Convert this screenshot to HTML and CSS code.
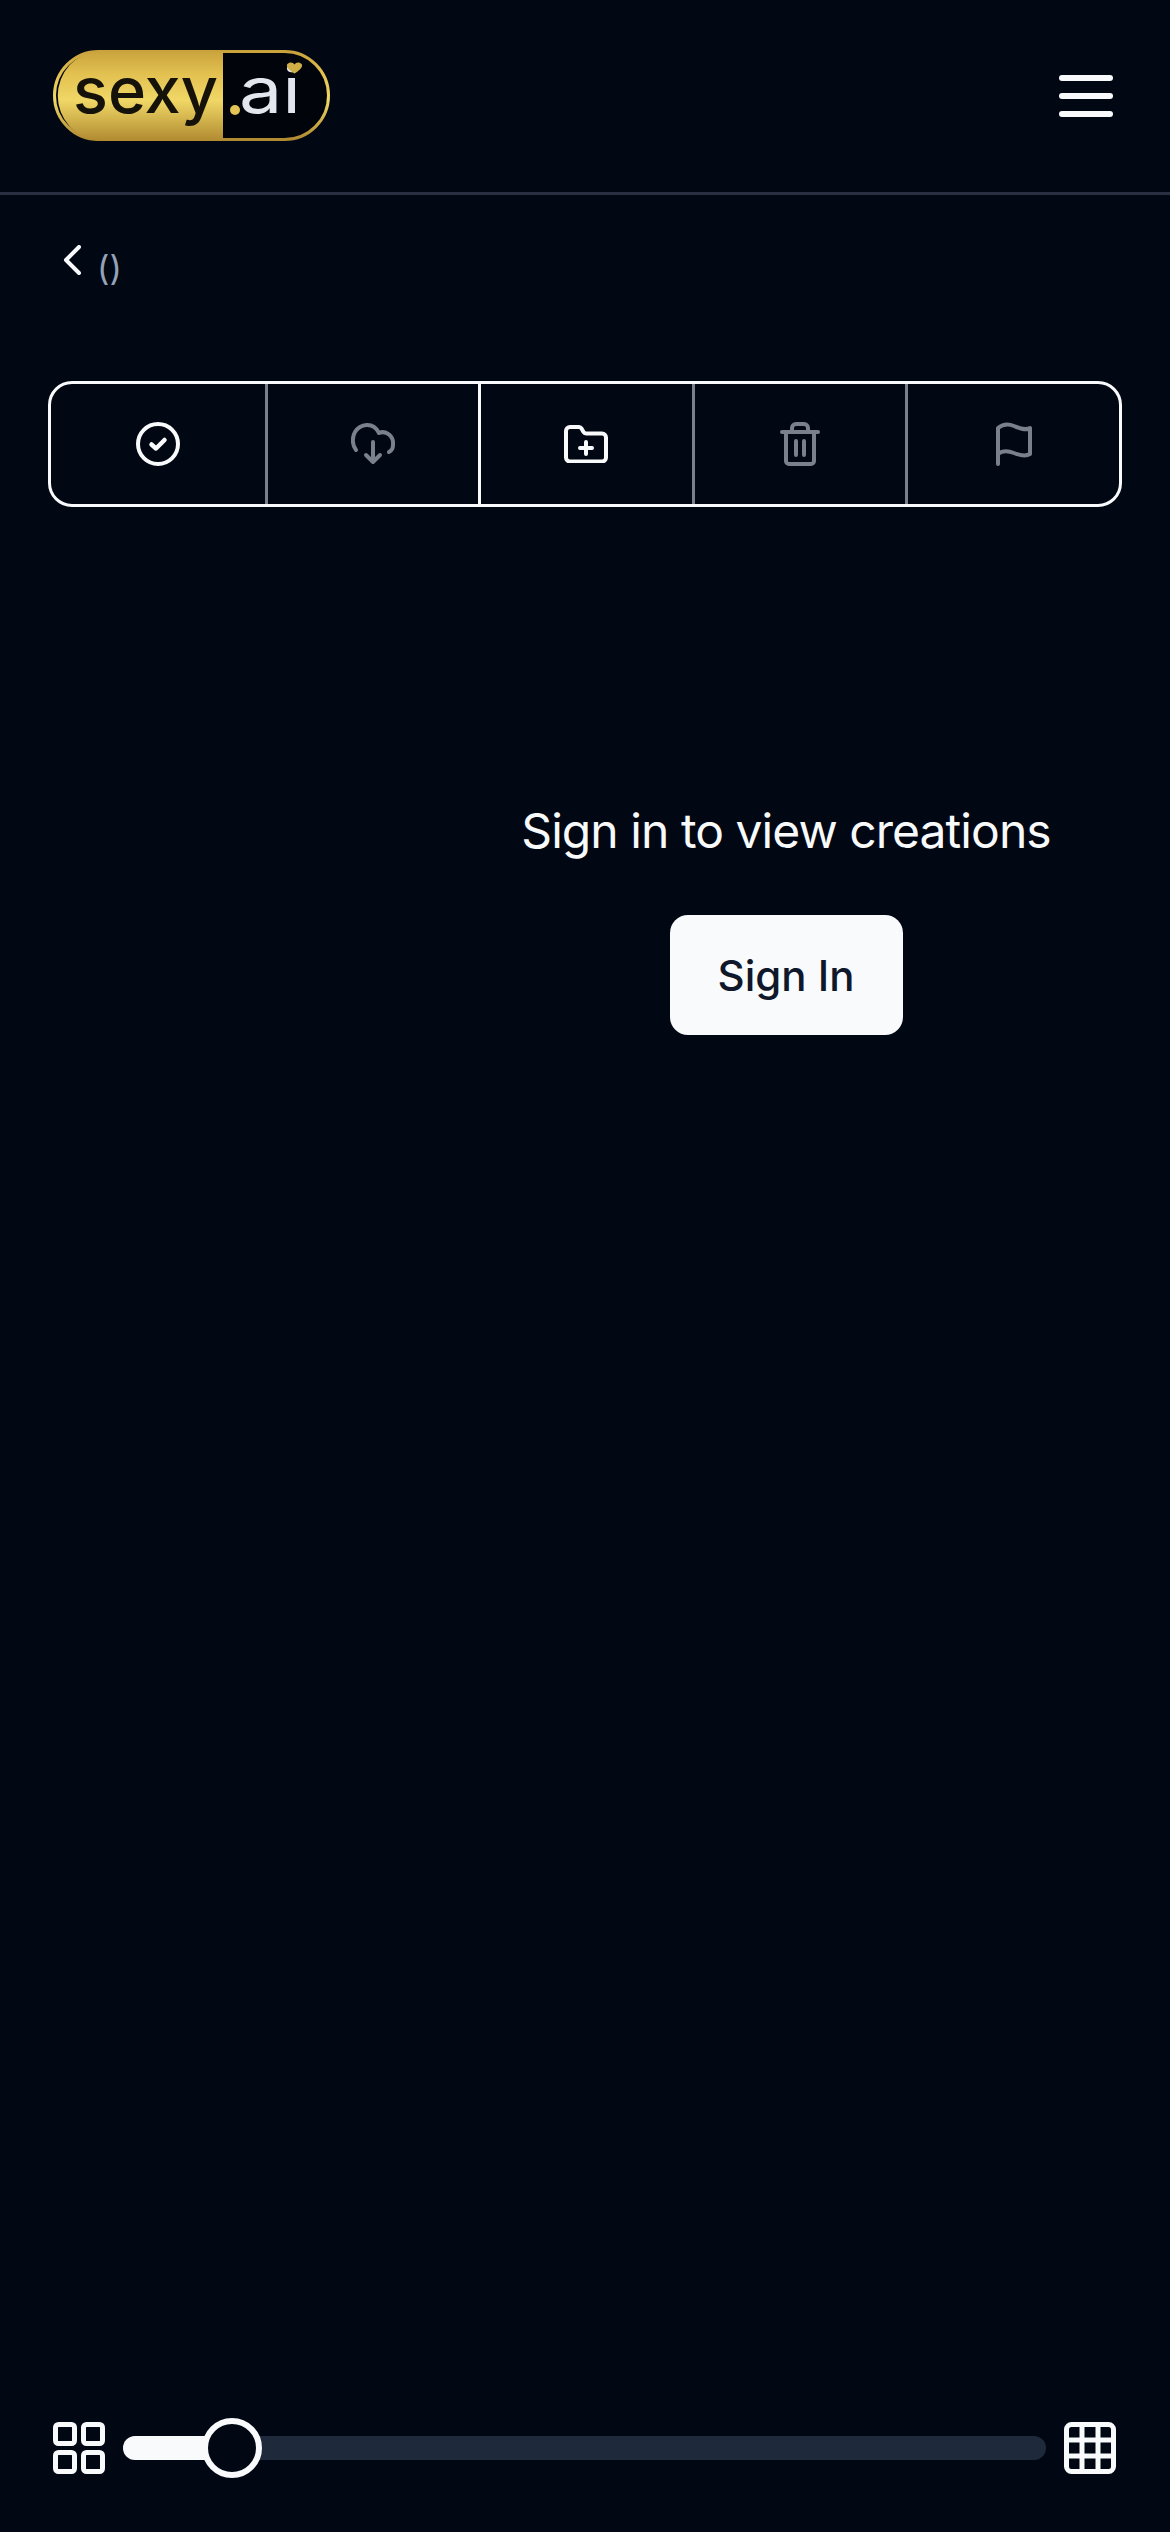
FILE: index.html
```html
<!DOCTYPE html>
<html lang="en">
<head>
<meta charset="UTF-8">
<meta name="viewport" content="width=device-width, initial-scale=1.0">
<title>Creations</title>
<link rel="stylesheet" href="styles.css">
</head>
<body>

<header class="topbar">
  <svg class="logo" viewBox="0 0 277 92" width="277" height="92">
    <defs>
      <linearGradient id="gold" x1="0" y1="0" x2="0" y2="1">
        <stop offset="0" stop-color="#c9a23c"/>
        <stop offset="0.25" stop-color="#e2c050"/>
        <stop offset="0.55" stop-color="#f0d766"/>
        <stop offset="1" stop-color="#b08a30"/>
      </linearGradient>
    </defs>
    <rect x="1.5" y="1.5" width="274" height="88" rx="44" fill="#01040a" stroke="url(#gold)" stroke-width="3"/>
    <path d="M170 0.5H45.5A45.5 45.5 0 0 0 45.5 91H170Z" fill="url(#gold)"/>
    <text class="logo-dark" x="20" y="63" textLength="145" lengthAdjust="spacingAndGlyphs">sexy</text>
    <circle cx="182" cy="60" r="5" fill="#e3c455"/>
    <text class="logo-light" x="186" y="63" textLength="62" lengthAdjust="spacingAndGlyphs">ai</text>
    <path d="M234 14.5c3-3 6-2 7.500 0c1.500-2 4.500-3 7.500 0c1 3-4 7-7.500 9c-3.500-2-8.500-6-7.500-9Z" fill="#cfae45"/>
  </svg>
  <button class="menu-btn" aria-label="Menu">
    <span></span><span></span><span></span>
  </button>
</header>

<div class="crumb">
  <svg class="crumb-back" viewBox="0 0 18 30" width="18" height="30"><path d="M16 2L3 15l13 13" fill="none" stroke="#f8fafc" stroke-width="4" stroke-linecap="round" stroke-linejoin="round"/></svg>
  <span class="crumb-count">()</span>
</div>

<div class="toolbar">
  <button class="tool">
    <svg viewBox="0 0 44 44" width="44" height="44" fill="none" stroke="#f8fafc" stroke-width="4" stroke-linecap="round" stroke-linejoin="round"><circle cx="22" cy="22" r="20"/><path d="M15.500 22.500l4.500 4 8.500-8.500" stroke-width="4.500"/></svg>
  </button>
  <button class="tool tool-dim">
    <svg viewBox="0 0 44 44" width="44" height="44" fill="none" stroke="#7b808c" stroke-width="4" stroke-linecap="round" stroke-linejoin="round"><path d="M5 28C1 23 1 15 4 10C9 2 22-1 28 11C35 8 43 14 42 23C42 26 40 29 38 30"/><path d="M22 20v20M15 33l7 7 7-7"/></svg>
  </button>
  <button class="tool tool-on">
    <svg viewBox="0 0 44 38" width="44" height="38" fill="none" stroke="#f8fafc" stroke-width="4" stroke-linecap="round" stroke-linejoin="round"><path d="M2 6a4 4 0 0 1 4-4h9a3 3 0 0 1 2.500 1.500l2 3.500a3 3 0 0 0 2.500 1.500h16a4 4 0 0 1 4 4v20a4 4 0 0 1-4 4H6a4 4 0 0 1-4-4Z"/><path d="M22 17v12M16 23h12"/></svg>
  </button>
  <button class="tool tool-dim">
    <svg viewBox="0 0 40 44" width="40" height="44" fill="none" stroke="#7b808c" stroke-width="4" stroke-linecap="round" stroke-linejoin="round"><path d="M2 10h36M6 10v29a3 3 0 0 0 3 3h22a3 3 0 0 0 3-3V10M12 10V6a4 4 0 0 1 4-4h8a4 4 0 0 1 4 4v4M16 19v14M24 19v14"/></svg>
  </button>
  <button class="tool tool-dim">
    <svg viewBox="0 0 38 44" width="38" height="44" fill="none" stroke="#7b808c" stroke-width="4" stroke-linecap="round" stroke-linejoin="round"><path d="M3 42V6c5-4 11-4 16-2s11 5 16 2v26c-5 3-11 1-16-1s-11-3-16 1"/></svg>
  </button>
</div>

<main class="signin">
  <p class="signin-text">Sign in to view creations</p>
  <button class="signin-btn">Sign In</button>
</main>

<footer class="zoombar">
  <svg viewBox="0 0 52 52" width="52" height="52" fill="none" stroke="#f8fafc" stroke-width="5"><rect x="2.500" y="2.500" width="19" height="19" rx="3"/><rect x="30.500" y="2.500" width="19" height="19" rx="3"/><rect x="2.500" y="30.500" width="19" height="19" rx="3"/><rect x="30.500" y="30.500" width="19" height="19" rx="3"/></svg>
  <div class="slider">
    <div class="slider-fill"></div>
    <div class="slider-thumb"></div>
  </div>
  <svg viewBox="0 0 52 52" width="52" height="52" fill="none" stroke="#f8fafc" stroke-width="5"><rect x="2.500" y="2.500" width="47" height="47" rx="5"/><path d="M18 2v48M34 2v48M2 18h48M2 34h48"/></svg>
</footer>

</body>
</html>
```
FILE: styles.css
```css
body {
  margin: 0;
  height: 2532px;
  display: flex;
  flex-direction: column;
  background-color: #010713;
  font-family: Inter, "Liberation Sans", sans-serif;
  color: #f8fafc;
  overflow: hidden;
}

button {
  font-family: inherit;
  border: none;
  background: none;
  padding: 0;
}

.topbar {
  height: 192px;
  flex: none;
  display: flex;
  align-items: flex-start;
  justify-content: space-between;
  padding: 0 57px 0 53px;
  border-bottom: 3px solid #2a2f42;
}

.logo {
  margin-top: 50px;
}

.logo-dark {
  font-size: 64px;
  font-weight: 500;
  fill: #15120a;
}

.logo-light {
  font-size: 64px;
  fill: #e3e6ee;
}

.menu-btn {
  margin-top: 75px;
  width: 54px;
  display: flex;
  flex-direction: column;
  gap: 12px;
}

.menu-btn span {
  height: 6px;
  border-radius: 3px;
  background-color: #f8fafc;
}

.crumb {
  display: flex;
  align-items: flex-start;
  gap: 16px;
  padding: 50px 0 0 63px;
}

.crumb-count {
  font-size: 34px;
  line-height: 46px;
  color: #94a3b8;
}

.toolbar {
  margin: 90px 48px 0;
  height: 126px;
  box-sizing: border-box;
  display: grid;
  grid-template-columns: repeat(5, 1fr);
  border: 3px solid #f8fafc;
  border-radius: 24px;
}

.tool {
  display: flex;
  align-items: center;
  justify-content: center;
  border-left: 3px solid #7b808c;
}

.tool:first-child {
  border-left: none;
}

.tool-on {
  border-left-color: #f8fafc;
}

.signin {
  flex: 1;
  display: flex;
  flex-direction: column;
  align-items: center;
  padding: 294px 0 0 402px;
}

.signin-text {
  margin: 0;
  font-size: 48px;
  line-height: 60px;
  letter-spacing: -0.95px;
}

.signin-btn {
  margin-top: 54px;
  width: 233px;
  height: 120px;
  border-radius: 18px;
  background-color: #f8fafc;
  color: #0f172a;
  font-size: 42px;
  font-weight: 500;
}

.zoombar {
  flex: none;
  display: flex;
  align-items: center;
  gap: 18px;
  padding: 0 54px 58px 53px;
}

.slider {
  flex: 1;
  height: 24px;
  position: relative;
  border-radius: 12px;
  background-color: #1e293b;
}

.slider-fill {
  width: 108px;
  height: 100%;
  border-radius: 12px 0 0 12px;
  background-color: #f8fafc;
}

.slider-thumb {
  position: absolute;
  left: 79px;
  top: -18px;
  width: 60px;
  height: 60px;
  box-sizing: border-box;
  border: 6px solid #f8fafc;
  border-radius: 50%;
  background-color: #010713;
}
```
